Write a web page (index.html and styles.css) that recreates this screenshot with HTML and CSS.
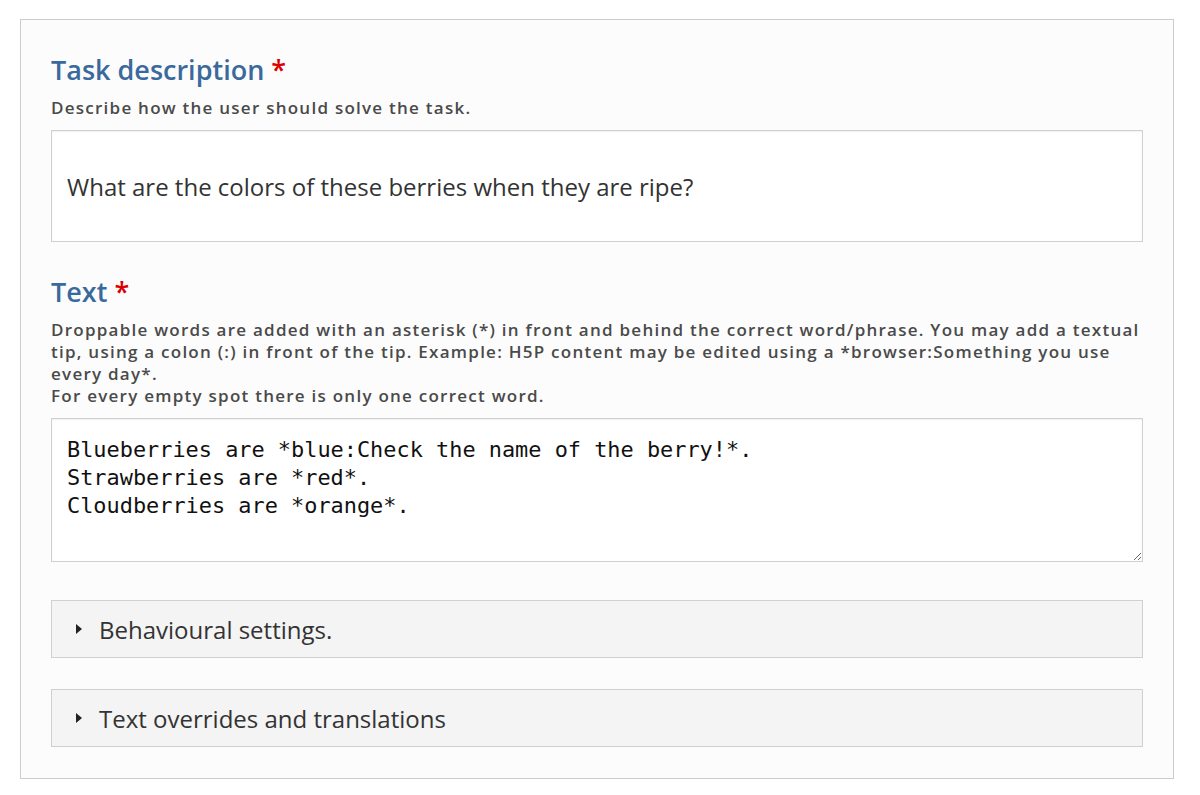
FILE: index.html
```html
<!DOCTYPE html>
<html lang="en">
<head>
<meta charset="utf-8">
<title>Drag the words editor</title>
<link rel="stylesheet" href="styles.css">
</head>
<body>
<div class="form">
  <div class="field">
    <h2 class="label">Task description <span class="req">*</span></h2>
    <div class="desc">Describe how the user should solve the task.</div>
    <div class="input">What are the colors of these berries when they are ripe?</div>
  </div>
  <div class="field">
    <h2 class="label">Text <span class="req">*</span></h2>
    <div class="desc">Droppable words are added with an asterisk (*) in front and behind the correct word/phrase. You may add a textual tip, using a colon (:) in front of the tip. Example: H5P content may be edited using a *browser:Something you use every day*.<br>For every empty spot there is only one correct word.</div>
    <textarea class="code" spellcheck="false">Blueberries are *blue:Check the name of the berry!*.
Strawberries are *red*.
Cloudberries are *orange*.</textarea>
  </div>
  <div class="group"><span class="caret"></span>Behavioural settings.</div>
  <div class="group"><span class="caret"></span>Text overrides and translations</div>
</div>
</body>
</html>
```

FILE: styles.css
```css
html, body {
  margin: 0;
  padding: 0;
  background: #ffffff;
}
body {
  font-family: "Open Sans", "Noto Sans", sans-serif;
  color: #333;
}
.form {
  margin: 19px 26px 0 20px;
  height: 760px;
  box-sizing: border-box;
  border: 1px solid #cccccc;
  background: #fcfcfc;
  padding: 30px 30px 0 30px;
}
.label {
  margin: 0;
  font-size: 27px;
  line-height: 39px;
  font-weight: 600;
  color: #3a6a9c;
}
.req {
  color: #dd0000;
}
.desc {
  font-size: 17px;
  line-height: 22px;
  font-weight: 600;
  color: #4a4a4a;
  letter-spacing: 1.25px;
  margin: 8px 0 11px;
}
.input {
  background: #fff;
  border: 1px solid #d0d0d0;
  box-shadow: inset 0 1px 2px rgba(0,0,0,0.06);
  height: 110px;
  display: flex;
  align-items: center;
  padding: 0 15px;
  font-size: 24px;
  color: #333;
  margin-bottom: 30px;
}
.code {
  display: block;
  width: 100%;
  box-sizing: border-box;
  height: 144px;
  margin: 0 0 38px;
  border: 1px solid #d0d0d0;
  box-shadow: inset 0 1px 2px rgba(0,0,0,0.06);
  background: #fff;
  padding: 17px 15px 15px;
  font-family: "DejaVu Sans Mono", "Liberation Mono", monospace;
  font-size: 21.9px;
  line-height: 28px;
  color: #111;
  outline: none;
  overflow: hidden;
}
.group {
  height: 56px;
  border: 1px solid #d0d0d0;
  background: #f4f4f4;
  display: flex;
  align-items: center;
  padding-left: 24px;
  font-size: 24px;
  color: #333;
  margin-bottom: 31px;
}
.caret {
  width: 0;
  height: 0;
  border-top: 5px solid transparent;
  border-bottom: 5px solid transparent;
  border-left: 6px solid #222;
  margin-right: 17px;
}
```
